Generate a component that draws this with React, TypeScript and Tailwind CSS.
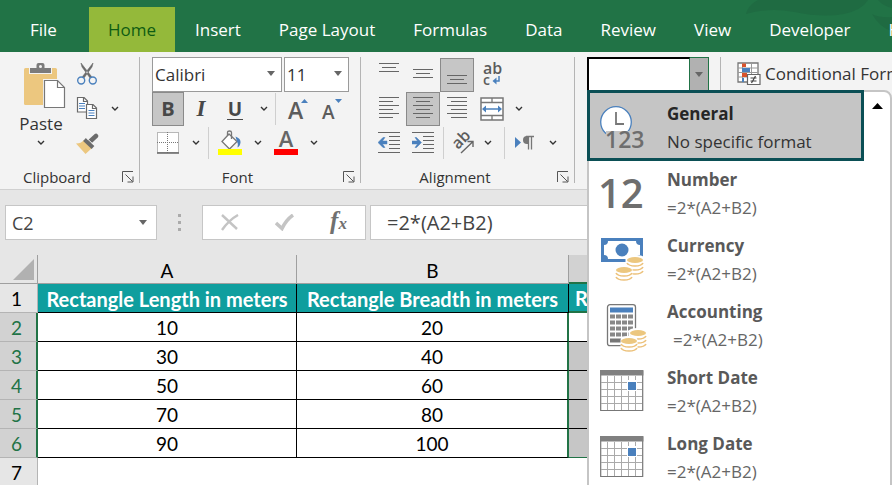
import type { ReactNode } from "react";
import { clsx } from "clsx";

const tabs = ["File", "Home", "Insert", "Page Layout", "Formulas", "Data", "Review", "View", "Developer", "Help"];

const rows = [
  ["10", "20"],
  ["30", "40"],
  ["50", "60"],
  ["70", "80"],
  ["90", "100"],
];

function Chevron() {
  return (
    <svg width="8" height="6" viewBox="0 0 8 6" fill="none" stroke="#333" strokeWidth="1.4">
      <path d="M1 1l3 3 3-3" />
    </svg>
  );
}

function Caret({ className }: { className?: string }) {
  return (
    <svg width="8" height="5" viewBox="0 0 8 5" fill="#666" className={className}>
      <path d="M0 0h8L4 5z" />
    </svg>
  );
}

function Launcher() {
  return (
    <svg width="12" height="12" viewBox="0 0 12 12" fill="none" stroke="#555" strokeWidth="1">
      <path d="M.5 11V.5H11M3.5 3.5l7 7M11 5.5v5.5H5.5" />
    </svg>
  );
}

function PasteIcon() {
  return (
    <svg width="42" height="46" viewBox="0 0 42 46">
      <rect x="0" y="5" width="33" height="37" rx="1.5" fill="#ecc77f" />
      <path d="M5 3.5h7V2a2 2 0 0 1 2-2h5a2 2 0 0 1 2 2v1.500h7V11H5z" fill="#f3f3f3" />
      <path d="M6 5h6.500V2q0-2 2-2h4q2 0 2 2v3H27v5H6z" fill="#7b7b7b" />
      <circle cx="16.500" cy="3.500" r="1.500" fill="#f3f3f3" />
      <path d="M19 16h15l8 8v22H19z" fill="#f3f3f3" />
      <path d="M20.500 17.500h13l7 7v20h-20z" fill="#fff" stroke="#777" strokeWidth="1.200" />
      <path d="M33.500 17.500v7h7" fill="none" stroke="#777" strokeWidth="1.200" />
    </svg>
  );
}

function CutIcon() {
  return (
    <svg width="20" height="22" viewBox="0 0 20 22" fill="none">
      <path d="M4 0l1 4 8 11 1.500-1.500zM16 0l-1 4-8 11-1.500-1.500z" fill="#6a6a6a" stroke="#6a6a6a" strokeWidth=".6" />
      <circle cx="4.200" cy="17.500" r="3.500" stroke="#4a80bd" strokeWidth="1.400" />
      <circle cx="15.800" cy="17.500" r="3.500" stroke="#4a80bd" strokeWidth="1.400" />
    </svg>
  );
}

function CopyIcon() {
  return (
    <svg width="22" height="23" viewBox="0 0 22 23" strokeWidth="1.200">
      <path d="M1.500.5H8L11.500 4v11h-10z" fill="#fff" stroke="#6a6a6a" />
      <path d="M7.500.5v4h4" fill="none" stroke="#6a6a6a" />
      <path d="M3 6.500h6M3 9h6M3 11.500h6" stroke="#4a80bd" />
      <path d="M10.500 7.500H17l3.500 3.500v10.500h-10z" fill="#fff" stroke="#6a6a6a" />
      <path d="M16.500 7.500v4h4" fill="none" stroke="#6a6a6a" />
      <path d="M12.500 13.500h6M12.500 16h6M12.500 18.500h6" stroke="#4a80bd" />
    </svg>
  );
}

function PainterIcon() {
  return (
    <svg width="24" height="21" viewBox="0 0 24 21" fill="none">
      <path d="M0 10.500q5 0 8-3.500l8 8-6.500 6z" fill="#ecc77f" />
      <path d="M8.500 6.500l8.500 8" stroke="#6b6b6b" strokeWidth="4" />
      <path d="M14 8.500L20 3" stroke="#6b6b6b" strokeWidth="4.500" strokeLinecap="round" />
      <path d="M10.500 5l8 7.500" stroke="#f3f3f3" strokeWidth="1" />
    </svg>
  );
}

function BordersIcon() {
  return (
    <svg width="22" height="22" viewBox="0 0 22 22" fill="none" stroke="#777">
      <rect x=".5" y=".5" width="21" height="20" fill="#fff" strokeDasharray="1 1" />
      <path d="M10.500 0v21M0 10.500h22" strokeDasharray="1 1" />
      <path d="M0 21h22" stroke="#666" strokeWidth="1.500" />
    </svg>
  );
}

function FillIcon() {
  return (
    <svg width="25" height="26" viewBox="0 0 25 26" fill="none">
      <path d="M11 4l8 7.500-7.500 7.500L4 11.500z" fill="#fff" stroke="#777" strokeWidth="1.300" />
      <path d="M9.500 6V2.500q0-1.500 2-1.500t2 1.500V9" stroke="#777" strokeWidth="1.300" />
      <path d="M17.500 6.500q5.500 2 5 6t-3 5q1-4-.5-6z" fill="#4a80bd" />
      <path d="M0 19h24v6H0z" fill="#ff0" />
    </svg>
  );
}

function FontColorIcon() {
  return (
    <svg width="24" height="26" viewBox="0 0 24 26" className="overflow-visible">
      <text x="12" y="17" textAnchor="middle" fontSize="22" fontWeight="600" fill="#666">A</text>
      <path d="M0 19h24v6H0z" fill="red" />
    </svg>
  );
}

function SizeIcon({ grow }: { grow?: boolean }) {
  return (
    <svg width="22" height="24" viewBox="0 0 22 24" className="overflow-visible">
      <text x="0" y="22" fontSize={grow ? 23 : 19} fontWeight="600" fill="#5c5c5c">A</text>
      <path d={grow ? "M13 6h7l-3.500-4z" : "M13 2h7l-3.500 4z"} fill="#4a80bd" />
    </svg>
  );
}

function Lines({ d }: { d: string }) {
  return (
    <svg width="20" height="24" viewBox="0 0 20 24" fill="none" stroke="#666" strokeWidth="1">
      <path d={d} />
    </svg>
  );
}

function WrapIcon() {
  return (
    <svg width="20" height="26" viewBox="0 0 20 26" className="overflow-visible">
      <text x="1" y="12" fontSize="16" fontWeight="600" fill="#5c5c5c">ab</text>
      <text x="1" y="23" fontSize="14" fontWeight="600" fill="#5c5c5c">c</text>
      <path d="M14.500 15.500L10.500 19l4 3.500z" fill="#4a80bd" />
      <path d="M17 14v5h-4" fill="none" stroke="#4a80bd" strokeWidth="1.500" />
    </svg>
  );
}

function MergeIcon() {
  return (
    <svg width="24" height="24" viewBox="0 0 24 24" fill="none">
      <path d="M1 1h22v22H1z" fill="#fff" stroke="#777" strokeWidth="1.500" />
      <path d="M1 5.500h22M1 18.500h22M12 1v4.500M12 18.500V23" stroke="#777" strokeWidth="1.300" />
      <path d="M4 12h16" stroke="#4a80bd" strokeWidth="1.500" />
      <path d="M2 12l4-3.500v7zM22 12l-4-3.500v7z" fill="#4a80bd" />
    </svg>
  );
}

function IndentIcon({ right }: { right?: boolean }) {
  return (
    <svg width="22" height="22" viewBox="0 0 22 22" fill="none">
      <path d="M0 .5h22M11 4.500h11M11 8.500h11M11 12.500h11M11 16.500h11M0 20.500h22" stroke="#666" />
      {right ? (
        <path d="M9.500 10.500L4.500 5.500h-1.500l2.500 3.500H0v3h5.500L3 15.500h1.500z" fill="#4a80bd" stroke="#4a80bd" strokeWidth=".5" />
      ) : (
        <path d="M0 10.500L5 5.500h2L4.500 9H9v3H4.500L7 15.500H5z" fill="#4a80bd" stroke="#4a80bd" strokeWidth=".5" />
      )}
    </svg>
  );
}

function OrientationIcon() {
  return (
    <svg width="22" height="22" viewBox="0 0 22 22" fill="none" className="overflow-visible">
      <text x="6" y="18" fontSize="16" fontWeight="600" fill="#5c5c5c" transform="rotate(-45 6 18)">ab</text>
      <path d="M9 21L20.500 10M15.500 9.500h5.500v5.500" stroke="#666" strokeWidth="1.400" />
    </svg>
  );
}

function DirectionIcon() {
  return (
    <svg width="20" height="18" viewBox="0 0 20 18">
      <path d="M0 3l6 5.500L0 14z" fill="#4a80bd" />
      <path d="M13 2h-1a4 4 0 0 0 0 8h1z" fill="#777" />
      <path d="M13.500 15.500v-13M16.500 15.500v-13M11 2.500h8" stroke="#777" strokeWidth="1.300" />
    </svg>
  );
}

function ConditionalIcon() {
  return (
    <svg width="24" height="24" viewBox="0 0 24 24" fill="none">
      <path d="M1 1h20v19H1z" fill="#fff" stroke="#777" strokeWidth="1.300" />
      <path d="M5.500 1v19M14.500 1v19M1 6h20M1 10.500h20M1 15h20" stroke="#999" />
      <path d="M5 1.500h4V5H5zM5 11h5v4H5z" fill="#d9532c" />
      <path d="M5 6h8v4H5zM5 16h2v4H5z" fill="#4a80bd" />
      <path d="M10.500 12.500h12.500v10H10.500z" fill="#fff" stroke="#666" strokeWidth="1.200" />
      <path d="M13.500 16h6M13.500 19h6M18.500 14l-4 7" stroke="#444" strokeWidth="1.200" />
    </svg>
  );
}

function GeneralIcon() {
  return (
    <svg width="46" height="44" viewBox="0 0 46 44" className="overflow-visible">
      <circle cx="16" cy="16" r="15.300" fill="#fff" stroke="#4a80bd" strokeWidth="1.300" />
      <path d="M6 25h39v19H6z" fill="#c5c5c5" />
      <path d="M16 6v12h8" fill="none" stroke="#777" strokeWidth="1.800" />
      <text x="5" y="42" fontSize="23" fontWeight="600" fill="#6e6e6e">123</text>
    </svg>
  );
}

function NumberIcon() {
  return (
    <svg width="46" height="36" viewBox="0 0 46 36" className="overflow-visible">
      <text x="-2" y="32" fontSize="40" fontWeight="600" fill="#6e6e6e">12</text>
    </svg>
  );
}

function Coins({ x, y, layers }: { x: number; y: number; layers: number }) {
  return (
    <g transform={`translate(${x} ${y})`}>
      <path d={layers > 2 ? "M-9.500-1q0-4 9.500-4t9.500 4v13q0 4-9.500 4t-9.500-4z" : "M-8.500-1q0-4 8.500-4t8.500 4v9q0 4-8.500 4t-8.500-4z"} fill="#fff" />
      <ellipse rx="8" ry="3" fill="#ecc77f" />
      {Array.from({ length: layers }, (_, i) => (
        <path key={i} d={`M-8 ${3 + i * 4}q1.500 3 8 3t8-3`} fill="none" stroke="#ecc17a" strokeWidth="1.600" />
      ))}
    </g>
  );
}

function CurrencyIcon() {
  return (
    <svg width="44" height="44" viewBox="0 0 44 44">
      <path d="M1 0h42v24H1z" fill="#4a80bd" />
      <path d="M8 3h28q0 4 4 4v10q-4 0-4 4H8q0-4-4-4V7q4 0 4-4z" fill="#fff" />
      <circle cx="22" cy="12" r="6.500" fill="#4a80bd" />
      <Coins x={35} y={22} layers={3} />
      <Coins x={24} y={32} layers={2} />
    </svg>
  );
}

function AccountingIcon() {
  return (
    <svg width="48" height="44" viewBox="0 0 48 44" className="overflow-visible">
      <rect x="7.500" y=".7" width="28" height="41" rx="2.500" fill="#fff" stroke="#777" strokeWidth="1.300" />
      <path d="M10 3.500h23v5H10z" fill="#4a80bd" />
      <path d="M10 12.500h23M10 18.500h23M10 24.500h23M10 30.500h23" stroke="#888" strokeWidth="4" strokeDasharray="5 1" />
      <path d="M10 36.500h11" stroke="#777" strokeWidth="4" />
      <Coins x={38} y={29} layers={3} />
      <Coins x={29} y={37} layers={2} />
    </svg>
  );
}

function CalendarIcon() {
  return (
    <svg width="44" height="44" viewBox="0 0 44 44" fill="none">
      <path d="M.7 1h42v39.500H.7z" fill="#fff" stroke="#777" strokeWidth="1.200" />
      <path d="M0 0h43.400v5.500H0z" fill="#808080" />
      <path d="M7.500 6v34M14.500 6v34M21.500 6v34M28.500 6v34M35.500 6v34M1 12.500h41M1 19.500h41M1 26.500h41M1 33.500h41" stroke="#aaa" />
      <path d="M27 10h10v11H27z" fill="#fff" />
      <path d="M28 12h8v8h-8z" fill="#4a80bd" />
    </svg>
  );
}

const formats = [
  { title: "General", sample: "No specific format", icon: <GeneralIcon /> },
  { title: "Number", sample: "=2*(A2+B2)", icon: <NumberIcon /> },
  { title: "Currency", sample: "=2*(A2+B2)", icon: <CurrencyIcon /> },
  { title: "Accounting", sample: "=2*(A2+B2)", icon: <AccountingIcon />, indent: true },
  { title: "Short Date", sample: "=2*(A2+B2)", icon: <CalendarIcon /> },
  { title: "Long Date", sample: "=2*(A2+B2)", icon: <CalendarIcon /> },
];

function Tool({ label, active, className, children }: { label: string; active?: boolean; className?: string; children?: ReactNode }) {
  return (
    <button
      type="button"
      aria-label={label}
      className={clsx("flex h-[34px] shrink-0 items-center justify-center", className ?? "w-[34px]", active && "border border-[#8a8a8a] bg-[#c6c6c6]")}
    >
      {children}
    </button>
  );
}

function Divider() {
  return <div className="h-8 w-px shrink-0 bg-[#cfcfcf]" />;
}

function Group({ label, className, children }: { label: string; className: string; children: ReactNode }) {
  return (
    <section aria-label={label} className={clsx("flex shrink-0 flex-col", className)}>
      {children}
      <footer className="flex h-[29px] items-center pt-[5px]">
        <span className="flex-1 pr-2 text-center text-[15px] text-[#333]">{label}</span>
        <button type="button" aria-label={`${label} settings`} className="mr-[5px]">
          <Launcher />
        </button>
      </footer>
    </section>
  );
}

function GroupLine() {
  return <div className="mb-[6px] w-px shrink-0 bg-[#b4b4b4]" />;
}

function Combo({ label, value, className }: { label: string; value: string; className: string }) {
  return (
    <div className={clsx("relative h-[35px]", className)}>
      <select aria-label={label} defaultValue={value} className="h-full w-full appearance-none border border-[#9a9a9a] bg-white pl-[2px] text-[17px] text-[#333]">
        <option>{value}</option>
      </select>
      <Caret className="pointer-events-none absolute top-[14px] right-[7px]" />
    </div>
  );
}

function FormatMenu() {
  return (
    <div className="absolute top-full left-0 z-10 flex w-[305px] rounded-tr-lg border-2 border-[#c5c5c5] bg-white pb-4">
      <ul className="w-[275px] shrink-0">
        {formats.map((format, i) => (
          <li key={format.title}>
            <button
              type="button"
              className={clsx(
                "flex items-center text-left",
                i === 0 ? "-mt-[2px] -ml-[2px] h-[71px] w-[277px] border-[3px] border-[#0b4f55] bg-[#c5c5c5] pt-1 pl-[10px] text-[#262626]" : "h-[66px] w-full pl-[11px] text-[#595959]"
              )}
            >
              <span className="w-[67px] shrink-0">{format.icon}</span>
              <span className="flex flex-col">
                <span className="text-[17px] leading-7 font-bold">{format.title}</span>
                <span className={clsx("text-[17px] leading-7", format.indent && "pl-[6px]", i === 0 ? "text-[#333]" : "text-[#666]")}>{format.sample}</span>
              </span>
            </button>
          </li>
        ))}
      </ul>
      <button type="button" aria-label="Scroll up" className="flex h-7 flex-1 items-center justify-center">
        <svg width="11" height="6" viewBox="0 0 11 6">
          <path d="M0 6h11L5.500 0z" />
        </svg>
      </button>
    </div>
  );
}

function Ribbon() {
  return (
    <div className="flex border-b border-[#d0d0d0] bg-[#f3f3f3] pt-[5px]">
      <Group label="Clipboard" className="w-[139px]">
        <div className="flex h-[103px] pl-[14px]">
          <button type="button" className="flex w-[54px] flex-col items-center pt-[6px] text-[17px] leading-6 text-[#333]">
            <span className="pl-2">
              <PasteIcon />
            </span>
            <span className="mt-[3px]">Paste</span>
            <span className="mt-1">
              <Chevron />
            </span>
          </button>
          <div className="flex flex-col">
            <Tool label="Cut" className="w-[38px]"><CutIcon /></Tool>
            <div className="flex h-[35px] items-center">
              <Tool label="Copy" className="w-[38px]"><CopyIcon /></Tool>
              <Tool label="Copy options" className="w-[18px]"><Chevron /></Tool>
            </div>
            <Tool label="Format Painter" className="w-[40px]"><PainterIcon /></Tool>
          </div>
        </div>
      </Group>
      <GroupLine />
      <Group label="Font" className="w-[220px]">
        <div className="flex h-[35px] gap-[2px] pl-3">
          <Combo label="Font name" value="Calibri" className="w-[130px]" />
          <Combo label="Font size" value="11" className="w-[65px]" />
        </div>
        <div className="flex h-[34px] items-center pl-3 text-[#484848]">
          <Tool label="Bold" active className="w-8"><b className="text-[20px]">B</b></Tool>
          <Tool label="Italic"><b className="font-['Liberation_Serif',serif] text-[23px] italic">I</b></Tool>
          <Tool label="Underline"><b className="border-b border-[#484848] px-px text-[19px] leading-5">U</b></Tool>
          <Tool label="Underline options" className="w-[23px]"><Chevron /></Tool>
          <Divider />
          <div className="w-[2px]" />
          <Tool label="Increase font size" className="w-[42px]"><SizeIcon grow /></Tool>
          <Tool label="Decrease font size" className="w-[26px]"><SizeIcon /></Tool>
        </div>
        <div className="flex h-[34px] items-center pl-3">
          <Tool label="Borders" className="w-8"><BordersIcon /></Tool>
          <Tool label="Border options" className="w-[24px]"><Chevron /></Tool>
          <Divider />
          <Tool label="Fill color" className="w-[42px]"><FillIcon /></Tool>
          <Tool label="Fill options" className="w-[14px]"><Chevron /></Tool>
          <Tool label="Font color" className="w-[42px]"><FontColorIcon /></Tool>
          <Tool label="Font color options" className="w-[14px]"><Chevron /></Tool>
        </div>
      </Group>
      <GroupLine />
      <Group label="Alignment" className="w-[213px]">
        <div className="flex h-[35px] items-center pl-[11px]">
          <Tool label="Top align"><Lines d="M0 .5h20M3 4.500h14M0 8.500h20" /></Tool>
          <Tool label="Middle align"><Lines d="M0 6.500h20M3 10.500h14M0 14.500h20" /></Tool>
          <Tool label="Bottom align" active><Lines d="M0 12.500h20M3 16.500h14M0 20.500h20" /></Tool>
          <Tool label="Wrap text" className="w-[36px]"><WrapIcon /></Tool>
        </div>
        <div className="flex h-[34px] items-center pl-[11px]">
          <Tool label="Align left"><Lines d="M0 .5h20M0 4.500h14M0 8.500h20M0 12.500h14M0 16.500h20M0 20.500h14" /></Tool>
          <Tool label="Center" active><Lines d="M0 .5h20M3 4.500h14M0 8.500h20M3 12.500h14M0 16.500h20M3 20.500h14" /></Tool>
          <Tool label="Align right"><Lines d="M0 .5h20M4 4.500h16M0 8.500h20M4 12.500h16M0 16.500h20M4 20.500h16" /></Tool>
          <Tool label="Merge and center" className="w-[36px]"><MergeIcon /></Tool>
          <Tool label="Merge options" className="w-[18px]"><Chevron /></Tool>
        </div>
        <div className="flex h-[34px] items-center pl-[11px]">
          <Tool label="Decrease indent"><IndentIcon /></Tool>
          <Tool label="Increase indent"><IndentIcon right /></Tool>
          <div className="w-[3px]" />
          <Divider />
          <Tool label="Orientation" className="w-[38px]"><OrientationIcon /></Tool>
          <Tool label="Orientation options" className="w-[12px]"><Chevron /></Tool>
          <div className="w-[10px]" />
          <Divider />
          <Tool label="Text direction" className="w-[40px]"><DirectionIcon /></Tool>
          <Tool label="Direction options" className="w-[16px]"><Chevron /></Tool>
        </div>
      </Group>
      <GroupLine />
      <div className="w-[145px] shrink-0 pl-3">
        <div className="relative flex h-[33px] w-[122px]">
          <input aria-label="Number format" className="w-[103px] border-2 border-r border-b-0 border-black border-r-[#217346] bg-white pl-1 outline-none" />
          <button type="button" aria-label="Open number formats" className="flex flex-1 items-center justify-center border border-b-0 border-l-0 border-[#217346] bg-[#b1b1b1]">
            <Caret />
          </button>
          <FormatMenu />
        </div>
      </div>
      <GroupLine />
      <div className="flex-1 overflow-hidden pt-1 pl-4">
        <button type="button" className="flex items-center gap-1 text-[17px] whitespace-nowrap text-[#333]">
          <ConditionalIcon />
          Conditional Formatting
        </button>
      </div>
    </div>
  );
}

function FormulaBar() {
  return (
    <div className="flex h-[65px] items-center pl-[5px] text-[18px] text-[#444]">
      <div className="relative h-[35px] w-[152px]">
        <input aria-label="Name box" defaultValue="C2" className="h-full w-full border border-[#c6c6c6] bg-white pl-[6px]" />
        <button type="button" aria-label="Open names" className="absolute top-[15px] right-[10px]">
          <Caret className="block" />
        </button>
      </div>
      <div className="flex w-[45px] flex-col items-center gap-1">
        <span className="size-[3px] bg-[#ababab]" />
        <span className="size-[3px] bg-[#ababab]" />
        <span className="size-[3px] bg-[#ababab]" />
      </div>
      <div className="flex h-[35px] w-[164px] items-center border border-[#c6c6c6] bg-white">
        <button type="button" aria-label="Cancel" className="flex w-[54px] justify-center">
          <svg width="18" height="17" viewBox="0 0 18 17" fill="none" stroke="#c4c4c4" strokeWidth="2.400">
            <path d="M1 1l15 14M17 1Q8 6 1 16" />
          </svg>
        </button>
        <button type="button" aria-label="Enter" className="flex w-[55px] justify-center">
          <svg width="19" height="17" viewBox="0 0 19 17" fill="none" stroke="#c4c4c4" strokeWidth="3.500">
            <path d="M1 9l6 5.500Q11 6 18 1" />
          </svg>
        </button>
        <button type="button" aria-label="Insert function" className="flex-1 pb-1 font-['Liberation_Serif',serif] text-[25px] leading-7 font-bold text-[#707070] italic">
          f<sub className="bottom-0 text-[17px]">x</sub>
        </button>
      </div>
      <input aria-label="Formula" defaultValue="=2*(A2+B2)" className="ml-1 h-[35px] min-w-0 flex-1 border border-[#c6c6c6] bg-white pl-4 text-[20px]" />
    </div>
  );
}

function Sheet() {
  const columnHead = "h-[29px] border-r border-b border-[#9f9f9f] bg-[#e6e6e6] p-0 pt-1 font-normal";
  const titleCell = "h-[29px] border-r border-b border-black bg-[#0f9e9e] p-0 pt-px text-center text-[20px] leading-5 font-bold whitespace-nowrap text-white";

  return (
    <table className="w-full table-fixed border-separate border-spacing-0 font-['Lato','Open_Sans',sans-serif] text-[19px] leading-5 text-black">
      <colgroup>
        <col className="w-[38px]" />
        <col className="w-[259px]" />
        <col className="w-[272px]" />
        <col />
      </colgroup>
      <thead>
        <tr>
          <th className="h-[29px] border-r border-b border-[#9f9f9f] bg-[#e6e6e6] p-0 pr-[3px]">
            <svg width="21" height="21" viewBox="0 0 21 21" fill="#b1b1b1" className="ml-auto">
              <path d="M21 0v21H0z" />
            </svg>
          </th>
          <th className={columnHead}>A</th>
          <th className={columnHead}>B</th>
          <th className="border-b-2 border-[#217346] bg-[#d2d2d2] p-0" />
        </tr>
      </thead>
      <tbody>
        <tr>
          <th className="h-[29px] border-r border-b border-[#b4b4b4] bg-[#e6e6e6] p-0 pt-px pr-1 font-normal">1</th>
          <td className={titleCell}>Rectangle Length in meters</td>
          <td className={titleCell}>Rectangle Breadth in meters</td>
          <td className="border-b-2 border-[#217346] bg-[#0f9e9e] p-0 pt-px pl-[6px] text-[20px] leading-5 font-bold text-white">R</td>
        </tr>
        {rows.map(([a, b], i) => (
          <tr key={a}>
            <th className="h-[29px] border-r-2 border-b border-r-[#217346] border-b-[#b4b4b4] bg-[#d2d2d2] p-0 pt-px pr-[3px] font-normal text-[#217346]">{i + 2}</th>
            <td className="border-r border-b border-black bg-white p-0 pt-px text-center">{a}</td>
            <td className="border-r-2 border-b border-r-[#217346] border-b-black bg-white p-0 pt-px text-center">{b}</td>
            <td className={clsx("border-b p-0", i === 0 ? "bg-white" : "bg-[#c6c6c6]", i === rows.length - 1 ? "border-b-[#217346]" : "border-b-black")} />
          </tr>
        ))}
        <tr>
          <th className="h-[29px] border-r border-b border-[#b4b4b4] bg-[#e6e6e6] p-0 pt-px pr-1 font-normal">7</th>
          <td className="bg-white" />
          <td className="bg-white" />
          <td className="bg-white" />
        </tr>
      </tbody>
    </table>
  );
}

export default function App() {
  return (
    <div className="h-screen overflow-hidden bg-[#e6e6e6] font-['Open_Sans','Noto_Sans',sans-serif]">
      <nav className="relative flex h-[52px] items-end gap-[2px] overflow-hidden bg-[#217346] pl-3">
        <svg width="150" height="32" viewBox="0 0 150 32" fill="#1f6b42" className="absolute top-0 right-0">
          <path d="M16 0h110q-6 10-24 14-22 4-50-2-24-5-48 2Q6 5 16 0zM130 14q8 4 20 3v14q-12-3-20-17zM136 0h14v8q-9-2-14-8z" />
        </svg>
        {tabs.map((tab) => (
          <button
            key={tab}
            type="button"
            className={clsx(
              "relative h-[45px] shrink-0 text-[17px] whitespace-nowrap",
              tab === "Home" ? "bg-[#94b93a] px-[19px] text-[#0f5c13]" : "px-[18px] text-white",
              tab === "File" && "mr-3"
            )}
          >
            {tab}
          </button>
        ))}
      </nav>
      <Ribbon />
      <FormulaBar />
      <Sheet />
    </div>
  );
}
